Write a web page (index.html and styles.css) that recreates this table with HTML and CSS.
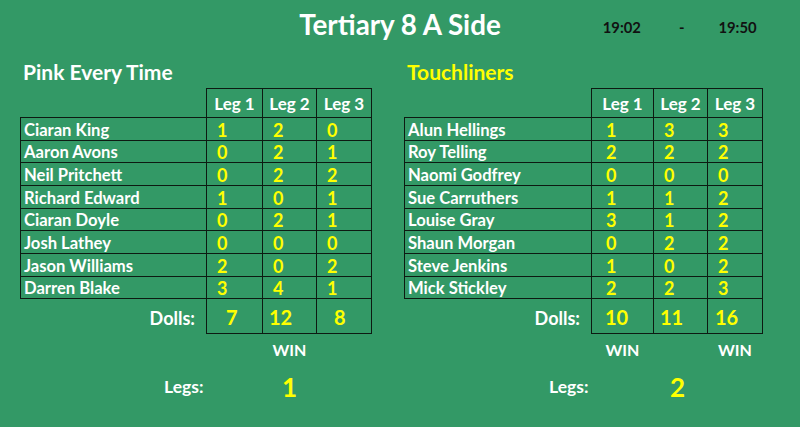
FILE: index.html
```html
<!DOCTYPE html>
<html lang="en">
<head>
<meta charset="utf-8">
<title>Tertiary 8 A Side</title>
<link rel="stylesheet" href="styles.css">
</head>
<body>
<div class="sheet">
  <header class="top">
    <div class="top__spacer"></div>
    <h1 class="title">Tertiary 8 A Side</h1>
    <div class="times"><span class="time">19:02</span><span class="dash">-</span><span class="time">19:50</span></div>
  </header>
  <main class="teams">
    <section class="team team--home">
      <h2 class="team__name">Pink Every Time</h2>
      <table class="score">
        <colgroup><col class="c-name"><col class="c-leg1"><col class="c-leg2"><col class="c-leg3"></colgroup>
        <thead>
          <tr class="head"><th class="blank"></th><th class="leg">Leg 1</th><th class="leg">Leg 2</th><th class="leg">Leg 3</th></tr>
        </thead>
        <tbody>
          <tr><td class="cell name">Ciaran King</td><td class="cell n">1</td><td class="cell n">2</td><td class="cell n">0</td></tr>
          <tr><td class="cell name">Aaron Avons</td><td class="cell n">0</td><td class="cell n">2</td><td class="cell n">1</td></tr>
          <tr><td class="cell name">Neil Pritchett</td><td class="cell n">0</td><td class="cell n">2</td><td class="cell n">2</td></tr>
          <tr><td class="cell name">Richard Edward</td><td class="cell n">1</td><td class="cell n">0</td><td class="cell n">1</td></tr>
          <tr><td class="cell name">Ciaran Doyle</td><td class="cell n">0</td><td class="cell n">2</td><td class="cell n">1</td></tr>
          <tr><td class="cell name">Josh Lathey</td><td class="cell n">0</td><td class="cell n">0</td><td class="cell n">0</td></tr>
          <tr><td class="cell name">Jason Williams</td><td class="cell n">2</td><td class="cell n">0</td><td class="cell n">2</td></tr>
          <tr><td class="cell name">Darren Blake</td><td class="cell n">3</td><td class="cell n">4</td><td class="cell n">1</td></tr>
        </tbody>
        <tfoot>
          <tr class="dolls"><td class="label">Dolls:</td><td class="total pad-20">7</td><td class="total pad-7">12</td><td class="total pad-18">8</td></tr>
          <tr class="win"><td></td><td></td><td class="win__cell">WIN</td><td></td></tr>
          <tr class="legs"><td class="legs__label">Legs:</td><td></td><td class="legs__value">1</td><td></td></tr>
        </tfoot>
      </table>
    </section>
    <section class="team team--away">
      <h2 class="team__name team__name--yellow">Touchliners</h2>
      <table class="score">
        <colgroup><col class="c-name"><col class="c-leg1"><col class="c-leg2"><col class="c-leg3"></colgroup>
        <thead>
          <tr class="head"><th class="blank"></th><th class="leg">Leg 1</th><th class="leg">Leg 2</th><th class="leg">Leg 3</th></tr>
        </thead>
        <tbody>
          <tr><td class="cell name">Alun Hellings</td><td class="cell n">1</td><td class="cell n">3</td><td class="cell n">3</td></tr>
          <tr><td class="cell name">Roy Telling</td><td class="cell n">2</td><td class="cell n">2</td><td class="cell n">2</td></tr>
          <tr><td class="cell name">Naomi Godfrey</td><td class="cell n">0</td><td class="cell n">0</td><td class="cell n">0</td></tr>
          <tr><td class="cell name">Sue Carruthers</td><td class="cell n">1</td><td class="cell n">1</td><td class="cell n">2</td></tr>
          <tr><td class="cell name">Louise Gray</td><td class="cell n">3</td><td class="cell n">1</td><td class="cell n">2</td></tr>
          <tr><td class="cell name">Shaun Morgan</td><td class="cell n">0</td><td class="cell n">2</td><td class="cell n">2</td></tr>
          <tr><td class="cell name">Steve Jenkins</td><td class="cell n">1</td><td class="cell n">0</td><td class="cell n">2</td></tr>
          <tr><td class="cell name">Mick Stickley</td><td class="cell n">2</td><td class="cell n">2</td><td class="cell n">3</td></tr>
        </tbody>
        <tfoot>
          <tr class="dolls"><td class="label">Dolls:</td><td class="total pad-14">10</td><td class="total pad-7">11</td><td class="total pad-8">16</td></tr>
          <tr class="win"><td></td><td class="win__cell">WIN</td><td></td><td class="win__cell">WIN</td></tr>
          <tr class="legs"><td class="legs__label">Legs:</td><td></td><td class="legs__value legs__value--shift">2</td><td></td></tr>
        </tfoot>
      </table>
    </section>
  </main>
</div>
</body>
</html>
```

FILE: styles.css
```css
* { box-sizing: border-box; }

html, body {
  margin: 0;
  padding: 0;
  background: #339966;
}

body {
  font-family: Lato, "Open Sans", "DejaVu Sans", sans-serif;
  font-weight: 700;
  color: #ffffff;
}

.sheet {
  width: 800px;
  height: 427px;
  overflow: hidden;
  background: #339966;
}

.top {
  display: grid;
  grid-template-columns: 1fr auto 1fr;
  align-items: start;
  height: 60px;
  padding-top: 8px;
}

.title {
  margin: 0;
  font-size: 27.8px;
  line-height: 33px;
  font-weight: 700;
  color: #ffffff;
}

.times {
  display: flex;
  padding-top: 10px;
  padding-left: 102px;
  font-size: 14.8px;
  line-height: 19px;
  color: #111111;
}

.dash { margin-left: 38px; margin-right: 34px; }

.teams {
  display: flex;
  gap: 33px;
  padding-left: 20px;
}

.team--home { width: 351px; }
.team--away { width: 358px; }

.team__name {
  margin: 0 0 4px 0;
  padding-left: 3px;
  font-size: 21px;
  line-height: 24px;
  font-weight: 700;
  color: #ffffff;
}

.team__name--yellow { color: #ffff00; }

.score {
  border-collapse: collapse;
  table-layout: fixed;
  width: 100%;
}

.c-name { width: 186px; }
.c-leg1 { width: 56px; }
.c-leg2 { width: 54px; }
.c-leg3 { width: 55px; }

.team--away .c-name { width: 187px; }
.team--away .c-leg1 { width: 62px; }

.score th,
.score td {
  padding: 0;
}

.score .leg {
  height: 29px;
  border: 1px solid #0d1a12;
  font-size: 17px;
  font-weight: 700;
  text-align: center;
  vertical-align: middle;
}

.score .cell {
  height: 22.67px;
  border: 1px solid #0d1a12;
  vertical-align: bottom;
}

.score .name {
  padding-left: 3px;
  font-size: 16.6px;
  line-height: 19px;
  white-space: nowrap;
}

.score .n {
  padding-left: 10px;
  font-size: 18px;
  line-height: 20px;
  color: #ffff00;
}

.team--away .score .n:nth-child(2) { padding-left: 14px; }

.dolls td { height: 34.4px; vertical-align: middle; }

.score .label {
  text-align: right;
  padding-right: 11px;
  font-size: 18px;
  line-height: 22px;
  padding-top: 3px;
}

.score .total {
  border: 1px solid #0d1a12;
  font-size: 20px;
  line-height: 24px;
  padding-top: 3px;
  color: #ffff00;
}

.score .pad-7 { padding-left: 6px; }
.score .pad-8 { padding-left: 7px; }
.score .pad-14 { padding-left: 13px; }
.score .pad-18 { padding-left: 17px; }
.score .pad-20 { padding-left: 19px; }

.win td { height: 34px; vertical-align: middle; }

.win__cell {
  text-align: center;
  font-size: 16px;
  line-height: 20px;
}

.legs td { height: 40px; vertical-align: middle; }

.score .legs__label {
  text-align: right;
  padding-right: 3px;
  font-size: 17.5px;
  line-height: 22px;
}

.score .legs__value {
  text-align: center;
  font-size: 26px;
  line-height: 30px;
  color: #ffff00;
}

.score .legs__value--shift { padding-right: 6px; }
```
